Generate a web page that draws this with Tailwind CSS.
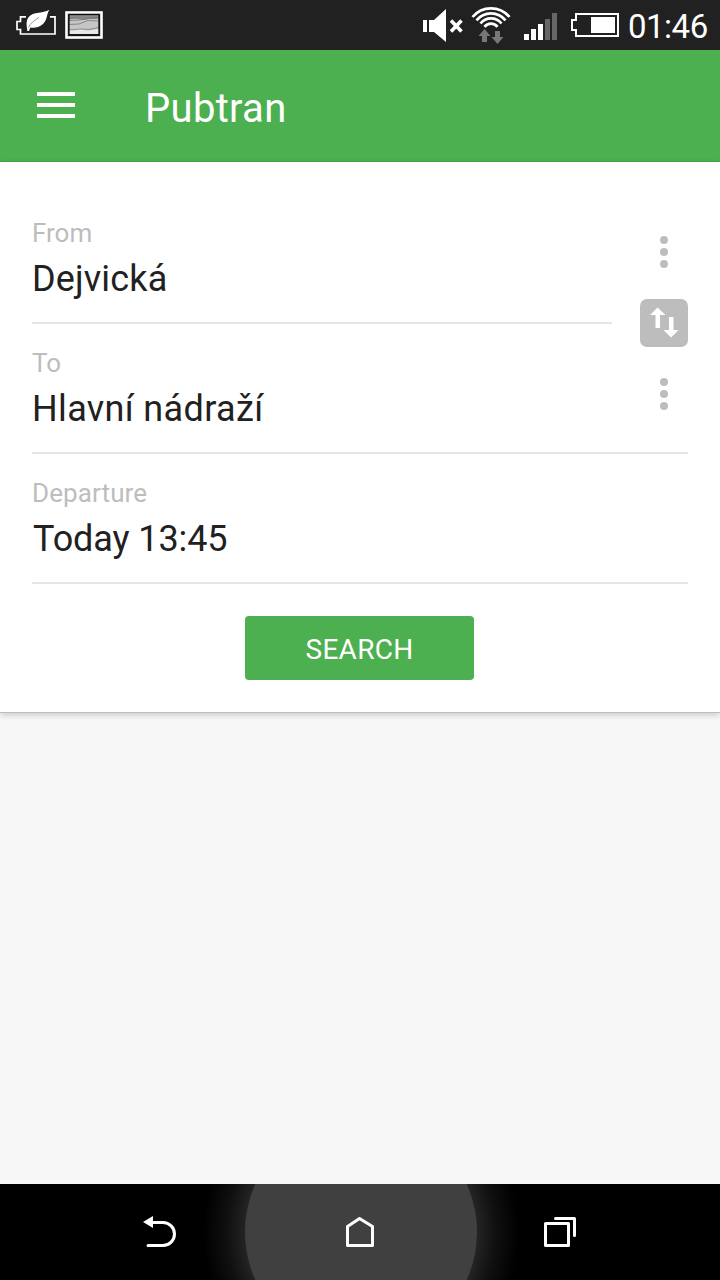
<!DOCTYPE html>
<html lang="en">
<head>
<meta charset="utf-8">
<title>Pubtran</title>
<script src="https://cdn.jsdelivr.net/npm/@tailwindcss/browser@4"></script>
</head>
<body class="flex h-[1280px] w-[720px] flex-col overflow-hidden bg-[#f7f7f7] font-['Roboto',sans-serif] text-[#212121]">
<!-- Status bar -->
<div class="flex h-[50px] shrink-0 items-start bg-[#212121] text-white">
  <svg class="ml-3 shrink-0" width="96" height="50" viewBox="12 0 96 50" fill="none">
    <path d="M26 16.800H20.500V21.500H17V29.500H20.500V34H55V16.800H50" stroke="#fff" stroke-width="1.700"/>
    <path d="M26.800 27C25.500 18 30 13.800 37 13C42 12.400 46 11.500 49.300 9.800C46.500 14 47.500 20 43 24C39 27.700 34 28 30.300 27.500L29 31H27.300Z" fill="#fff"/>
    <path d="M28.500 27.500C30.500 23 34 20.500 39 17.500" stroke="#777" stroke-width=".8"/>
    <rect x="66.500" y="12.500" width="35" height="25" stroke="#fff" stroke-width="2.600"/>
    <path d="M69 15H99V34H69Z" fill="#c6c6c6"/>
    <path d="M69 15H99V17.500Q90 20 83 19T69 19.500Z" fill="#888"/>
    <path d="M69 30L80 29L88 30.500L99 29V34H69Z" fill="#e8e8e8"/>
    <path d="M69 18.500L76 18L83 19.500L90 18L99 17M69 20.500L79 20L88 18.500L99 18.500M69 24.500L79 24L88 20.500L99 21M69 30L81 29L89 29.500L99 27.500" stroke="#777" stroke-width=".8"/>
    <rect x="69" y="14.500" width="30" height="20.500" stroke="#111" stroke-width="1.300"/>
  </svg>
  <svg class="ml-auto shrink-0" width="200" height="50" viewBox="420 0 200 50">
    <path d="M423 20H427V32H423ZM429 20H434L446 9V42L434 32H429Z" fill="#fff"/>
    <path d="M451 20.500L461.500 31.500M461.500 20.500L451 31.500" stroke="#fff" stroke-width="3.600"/>
    <g fill="none" stroke="#fff" stroke-width="2.700">
      <path d="M472.500 17A24 24 0 0 1 509.500 17"/>
      <path d="M476.500 20.300A18.500 18.500 0 0 1 505.500 20.300"/>
      <path d="M480.500 23.500A13.300 13.300 0 0 1 501.500 23.500"/>
      <path d="M484.500 26.800A8.300 8.300 0 0 1 497.500 26.800"/>
    </g>
    <path d="M484.500 29L490.500 36H487V42H482V36H478.500Z" fill="#777"/>
    <path d="M495 31H500V37H503.500L497.500 44L491.500 37H495Z" fill="#777"/>
    <path d="M524 34H529V40H524ZM531 29H536V40H531ZM538 24H543V40H538Z" fill="#fff"/>
    <path d="M545 19H550V40H545ZM552 13H557V40H552Z" fill="#666"/>
    <path d="M576 14H618V36H576V30H572V20H576Z" fill="none" stroke="#fff" stroke-width="2"/>
    <rect x="591" y="17" width="24" height="16" fill="#fff"/>
  </svg>
  <span class="mr-3 ml-[8px] w-[80px] pt-[6px] text-[33px] leading-[42px] tracking-[-0.5px] whitespace-nowrap">01:46</span>
</div>
<!-- App bar -->
<header class="flex h-[112px] shrink-0 items-center border-b border-[#48aa4c] bg-[#4caf50] text-white">
  <svg class="ml-[37px] shrink-0 -translate-y-px" width="38" height="26" viewBox="0 0 38 26"><path d="M0 0H38V4H0ZM0 11H38V15H0ZM0 22H38V26H0Z" fill="#fff"/></svg>
  <h1 class="ml-[70px] pt-[7px] text-[40px] leading-[48px] tracking-[0.3px]">Pubtran</h1>
</header>
<!-- Search form -->
<main class="flex h-[551px] shrink-0 flex-col border-b border-[#bdbdbd] bg-white px-8 pt-8 shadow-[0_2px_6px_rgba(0,0,0,0.18)]">
  <div class="flex h-[260px]">
    <div class="flex flex-1 flex-col">
      <div class="mr-[28px] h-[130px] w-[580px] border-b-2 border-[#e6e6e6] pt-[23px]">
        <div class="text-[26px] leading-[32px] text-[#bdbdbd]">From</div>
        <div class="pt-[8px] text-[36px] leading-[44px] tracking-[0.15px]">Dejvická</div>
      </div>
      <div class="h-[130px] border-b-2 border-[#e6e6e6] pt-[23px]">
        <div class="text-[26px] leading-[32px] text-[#bdbdbd]">To</div>
        <div class="pt-[8px] text-[36px] leading-[44px] tracking-[0.35px]">Hlavní nádraží</div>
      </div>
    </div>
    <div class="flex w-12 flex-col items-center border-b-2 border-[#e6e6e6] pt-[42px]">
      <svg class="shrink-0" width="8" height="32" fill="#bdbdbd"><circle cx="4" cy="4" r="4"/><circle cx="4" cy="16" r="4"/><circle cx="4" cy="28" r="4"/></svg>
      <svg class="mt-[31px] shrink-0" width="48" height="48" viewBox="0 0 48 48"><rect width="48" height="48" rx="7" fill="#bdbdbd"/><path d="M17.500 8.500L25.500 16H20V29H15.500V16H10ZM29 18H33.500V31H38.500L31 38.500L23.500 31H29Z" fill="#fff"/></svg>
      <svg class="mt-[31px] shrink-0" width="8" height="32" fill="#bdbdbd"><circle cx="4" cy="4" r="4"/><circle cx="4" cy="16" r="4"/><circle cx="4" cy="28" r="4"/></svg>
    </div>
  </div>
  <div class="h-[130px] border-b-2 border-[#e6e6e6] pt-[23px]">
    <div class="text-[26px] leading-[32px] tracking-[0.1px] text-[#bdbdbd]">Departure</div>
    <div class="pt-[8px] pl-px text-[36px] leading-[44px] tracking-[-0.1px]">Today 13:45</div>
  </div>
  <button class="mt-8 ml-[213px] h-16 w-[229px] rounded-[4px] bg-[#4caf50] pt-[4px] text-[28px] tracking-[0.3px] text-white">SEARCH</button>
</main>
<!-- Navigation bar -->
<nav class="mt-auto h-24 shrink-0 bg-black">
  <svg width="720" height="96" viewBox="0 0 720 96" fill="none">
    <defs><radialGradient id="glow" gradientUnits="userSpaceOnUse" cx="361" cy="48" r="158"><stop offset=".7" stop-color="#2a2a2a"/><stop offset=".85" stop-color="#101010"/><stop offset="1" stop-color="#000"/></radialGradient></defs>
    <rect x="203" width="316" height="96" fill="url(#glow)"/>
    <circle cx="361" cy="48" r="116" fill="#404040"/>
    <path d="M152 38.500H163A11.500 11.500 0 0 1 163 61.500H148" stroke="#fff" stroke-width="3" stroke-linecap="round"/>
    <path d="M143 38L153 32V44Z" fill="#fff"/>
    <path d="M347.500 42.500L359.500 34.500L372.500 42.500V61.500H347.500Z" stroke="#fff" stroke-width="3" stroke-linejoin="round"/>
    <path d="M545.500 39.500H568.500V61.500H545.500ZM555.500 34.500H574.500V51.500" stroke="#fff" stroke-width="3" stroke-linejoin="round" stroke-linecap="round"/>
  </svg>
</nav>
</body>
</html>
